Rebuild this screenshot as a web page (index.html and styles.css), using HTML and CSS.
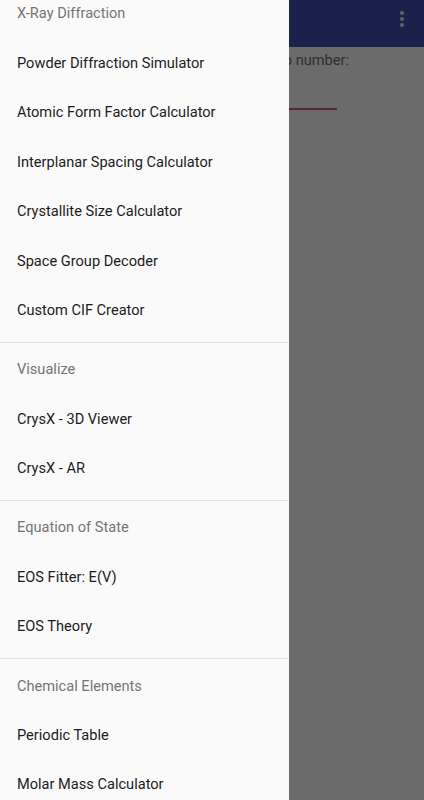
FILE: index.html
```html
<!DOCTYPE html>
<html lang="en">
<head>
  <meta charset="UTF-8">
  <title>CrysX</title>
  <link rel="stylesheet" href="styles.css">
</head>
<body>
  <div class="screen">
    <header class="appbar">
      <span class="overflow"><i></i><i></i><i></i></span>
    </header>
    <main class="content">
      <p class="label">group number:</p>
      <div class="field"></div>
    </main>

    <div class="scrim"></div>

    <nav class="drawer">
      <div class="menu">
        <section class="group">
          <div class="subheader">X-Ray Diffraction</div>
          <div class="item">Powder Diffraction Simulator</div>
          <div class="item">Atomic Form Factor Calculator</div>
          <div class="item">Interplanar Spacing Calculator</div>
          <div class="item">Crystallite Size Calculator</div>
          <div class="item">Space Group Decoder</div>
          <div class="item">Custom CIF Creator</div>
        </section>
        <section class="group">
          <div class="subheader">Visualize</div>
          <div class="item">CrysX - 3D Viewer</div>
          <div class="item">CrysX - AR</div>
        </section>
        <section class="group">
          <div class="subheader">Equation of State</div>
          <div class="item">EOS Fitter: E(V)</div>
          <div class="item">EOS Theory</div>
        </section>
        <section class="group">
          <div class="subheader">Chemical Elements</div>
          <div class="item">Periodic Table</div>
          <div class="item">Molar Mass Calculator</div>
        </section>
      </div>
    </nav>
  </div>
</body>
</html>
```

FILE: styles.css
```css
html, body {
  margin: 0;
  padding: 0;
}
body {
  font-family: Roboto, "Noto Sans", sans-serif;
  background: #fff;
}
.screen {
  position: relative;
  width: 424px;
  height: 800px;
  overflow: hidden;
}
.appbar {
  height: 47px;
  background: #3f51b5;
  display: flex;
  justify-content: flex-end;
  align-items: center;
  padding-right: 20px;
}
.overflow {
  display: flex;
  flex-direction: column;
  gap: 2px;
  margin-top: -9px;
}
.overflow i {
  width: 4px;
  height: 4px;
  border-radius: 50%;
  background: #e8e8f0;
}
.content {
  background: #fff;
}
.label {
  margin: 0;
  padding-top: 4px;
  width: 349px;
  text-align: right;
  white-space: nowrap;
  font-size: 14.6px;
  color: #6e6e6e;
}
.field {
  margin: 39px 0 0 88px;
  width: 249px;
  height: 2px;
  background: #cf5c76;
}
.scrim {
  position: absolute;
  inset: 0;
  background: rgba(0, 0, 0, 0.58);
}
.drawer {
  position: absolute;
  top: 0;
  left: 0;
  bottom: 0;
  width: 289px;
  background: #fafafa;
  overflow: hidden;
}
.menu {
  margin-top: -12.75px;
}
.group {
  padding-bottom: 8.8px;
  border-bottom: 1px solid #e3e3e3;
}
.subheader,
.item {
  box-sizing: border-box;
  height: 49.45px;
  display: flex;
  align-items: center;
  padding: 3px 0 0 17px;
  font-size: 14.6px;
  white-space: nowrap;
}
.subheader {
  color: #757575;
}
.item {
  color: #1c1c1c;
}
```
